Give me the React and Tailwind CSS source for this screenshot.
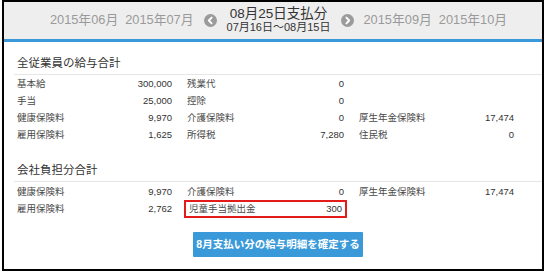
import React from "react";

const FONT = { fontFamily: '"Liberation Sans", "Noto Sans CJK JP", sans-serif' };

function Arrow({ dir }) {
  return (
    <svg width="13" height="13" viewBox="0 0 13 13" className="shrink-0">
      <circle cx="6.5" cy="6.5" r="6.5" fill="#9b9b9b" />
      {dir === "left" ? (
        <path d="M7.6 3.6 L4.8 6.5 L7.6 9.4" fill="none" stroke="#fff" strokeWidth="1.9" strokeLinecap="round" strokeLinejoin="round" />
      ) : (
        <path d="M5.4 3.6 L8.2 6.5 L5.4 9.4" fill="none" stroke="#fff" strokeWidth="1.9" strokeLinecap="round" strokeLinejoin="round" />
      )}
    </svg>
  );
}

function Cell({ label, value, boxed }) {
  return (
    <div
      className={
        "flex items-center justify-between px-[3px] " +
        (boxed ? "border-2 border-[#e31b1b] px-[1px]" : "")
      }
    >
      <span className="text-[#4a4a4a]">{label}</span>
      <span className="text-[#333]">{value}</span>
    </div>
  );
}

function Row({ cells, h }) {
  return (
    <div className={"grid grid-cols-[161px_163px_161px] gap-x-[9px] items-stretch " + h}>
      {cells.map((c, i) =>
        c ? <Cell key={i} {...c} /> : <div key={i} />
      )}
    </div>
  );
}

export default function App() {
  return (
    <div className="w-[546px] h-[273px] bg-white" style={FONT}>
      <div className="ml-[2px] w-[542px] h-[271px] border-2 border-black flex flex-col">
        <div className="h-[37px] bg-[#eeeeee] flex items-center justify-center pl-[11px] shrink-0">
          <span className="text-[12.8px] text-[#9a9a9a] leading-none">2015年06月</span>
          <span className="text-[12.8px] text-[#9a9a9a] leading-none ml-[7px]">2015年07月</span>
          <span className="ml-[10px] flex"><Arrow dir="left" /></span>
          <div className="ml-[10px] w-[104px] flex flex-col items-center">
            <span className="text-[13.5px] leading-[14px] text-[#333]">08月25日支払分</span>
            <span className="text-[11px] leading-[13px] text-[#333]">07月16日〜08月15日</span>
          </div>
          <span className="ml-[10px] flex"><Arrow dir="right" /></span>
          <span className="text-[12.8px] text-[#9a9a9a] leading-none ml-[10px]">2015年09月</span>
          <span className="text-[12.8px] text-[#9a9a9a] leading-none ml-[7px]">2015年10月</span>
        </div>
        <div className="h-[3px] bg-[#3a9ad9] shrink-0" />
        <div className="pl-[10px] flex flex-col text-[9.5px]">
          <div className="pt-[13px] pl-[3px] text-[11.5px] leading-[16px] text-[#333]">全従業員の給与合計</div>
          <div className="mt-[3px] h-px bg-[#e6e6e6]" />
          <div className="pt-[1px]">
            <Row h="h-[17px]" cells={[{ label: "基本給", value: "300,000" }, { label: "残業代", value: "0" }, null]} />
            <Row h="h-[17px]" cells={[{ label: "手当", value: "25,000" }, { label: "控除", value: "0" }, null]} />
            <Row h="h-[17px]" cells={[{ label: "健康保険料", value: "9,970" }, { label: "介護保険料", value: "0" }, { label: "厚生年金保険料", value: "17,474" }]} />
            <Row h="h-[17px]" cells={[{ label: "雇用保険料", value: "1,625" }, { label: "所得税", value: "7,280" }, { label: "住民税", value: "0" }]} />
          </div>
          <div className="pt-[18px] pl-[3px] text-[11.5px] leading-[16px] text-[#333]">会社負担分合計</div>
          <div className="mt-[3px] h-px bg-[#e6e6e6]" />
          <div className="pt-[2px]">
            <Row h="h-[16px]" cells={[{ label: "健康保険料", value: "9,970" }, { label: "介護保険料", value: "0" }, { label: "厚生年金保険料", value: "17,474" }]} />
            <Row h="h-[16px]" cells={[{ label: "雇用保険料", value: "2,762" }, { label: "児童手当拠出金", value: "300", boxed: true }, null]} />
          </div>
          <div className="flex justify-center pt-[16px]">
            <button className="w-[170px] h-[25px] bg-[#3a9ad9] text-white font-bold text-[10.5px] rounded-[1px]">
              8月支払い分の給与明細を確定する
            </button>
          </div>
        </div>
      </div>
    </div>
  );
}
